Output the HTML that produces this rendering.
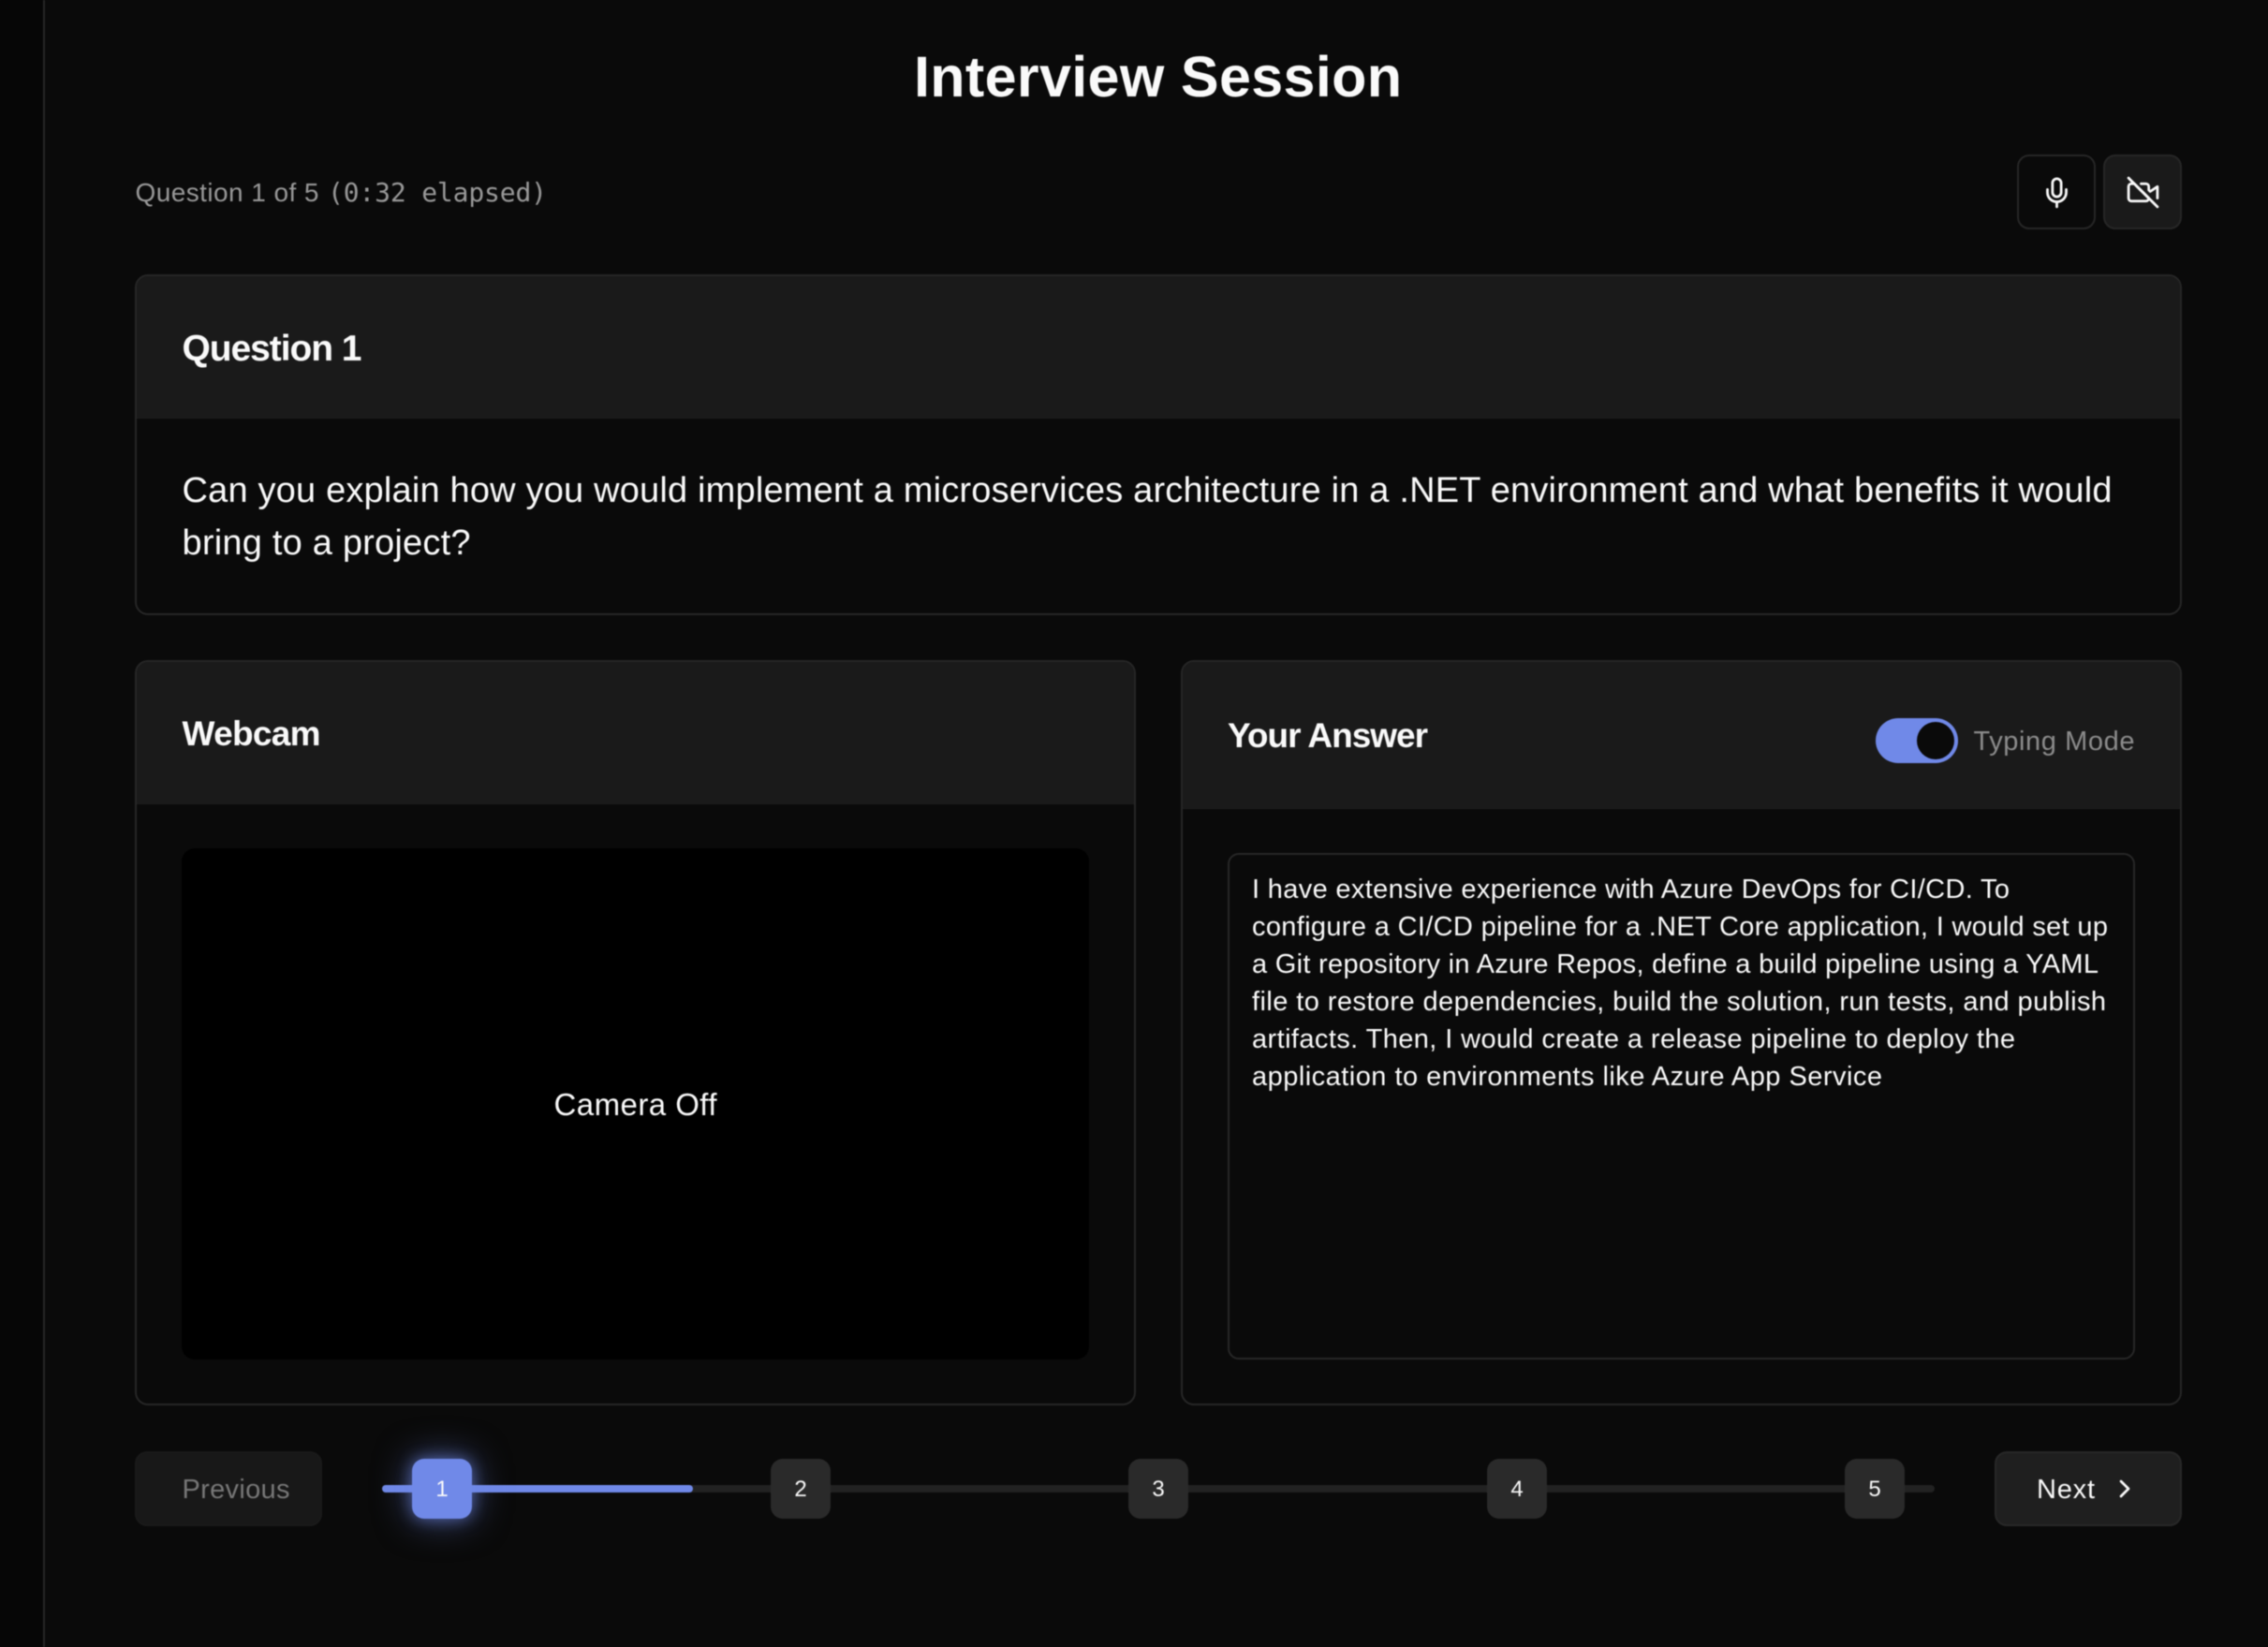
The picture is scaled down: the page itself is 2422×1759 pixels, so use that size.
<!DOCTYPE html>
<html lang="en"><head><meta charset="utf-8"><title>Interview Session</title>
<style>
html,body{margin:0;padding:0;width:2422px;height:1759px;overflow:hidden;background:#0a0a0a}
#w{position:absolute;left:0;top:0;width:2422px;height:1759px;filter:blur(.45px)}
.a{position:absolute;box-sizing:border-box}
.card{border:2px solid #272727;border-radius:14px;background:#0a0a0a;overflow:hidden}
.head{position:absolute;left:0;top:0;right:0;background:#1a1a1a;border-bottom:1px solid #1e1e1e}
.step{width:64px;height:64px;top:1558px;border-radius:13px;background:#2a2a2a}
svg.t{position:absolute;left:0;top:0}
svg.t text{font-family:"Liberation Sans",sans-serif;fill:#fafafa}
</style></head>
<body>
<div id="w">
<div class="a" style="left:0;top:0;width:48px;height:1759px;background:#060606;border-right:2px solid #272727"></div>

<div class="a" style="left:2154px;top:165px;width:84px;height:80px;border:2px solid #272727;border-radius:13px;background:#0a0a0a"></div>
<div class="a" style="left:2246px;top:165px;width:84px;height:80px;border:2px solid #272727;border-radius:13px;background:#1a1a1a"></div>
<svg class="a" style="left:2177.5px;top:186.5px" width="37" height="37" viewBox="0 0 24 24" fill="none" stroke="#fafafa" stroke-width="1.8" stroke-linecap="round" stroke-linejoin="round"><path d="M12 2.5a3 3 0 0 0-3 3v6.5a3 3 0 0 0 6 0V5.5a3 3 0 0 0-3-3Z"/><path d="M18.5 10v2a6.500 6.500 0 0 1-13 0v-2"/><line x1="12" x2="12" y1="19" y2="22"/></svg>
<svg class="a" style="left:2269.5px;top:186.5px" width="37" height="37" viewBox="0 0 24 24" fill="none" stroke="#fafafa" stroke-width="1.8" stroke-linecap="round" stroke-linejoin="round"><path d="M10.660 6H14a2 2 0 0 1 2 2v2.340l1 1L22 8v8"/><path d="M16 16a2 2 0 0 1-2 2H4a2 2 0 0 1-2-2V8a2 2 0 0 1 2-2h2l10 10Z"/><line x1="2" x2="22" y1="2" y2="22"/></svg>

<div class="a card" style="left:144px;top:293px;width:2186px;height:364px"><div class="head" style="height:151px"></div></div>

<div class="a card" style="left:144px;top:705px;width:1069px;height:796px"><div class="head" style="height:151px"></div></div>
<div class="a" style="left:194px;top:906px;width:969px;height:546px;background:#000;border-radius:14px"></div>

<div class="a card" style="left:1261px;top:705px;width:1069px;height:796px"><div class="head" style="height:156px"></div></div>
<div class="a" style="left:2003px;top:767px;width:88px;height:48px;border-radius:24px;background:#7089e8"></div>
<div class="a" style="left:2047px;top:771px;width:40px;height:40px;border-radius:50%;background:#0a0a0a"></div>
<div class="a" style="left:1311px;top:911px;width:969px;height:541px;border:2px solid #272727;border-radius:12px;background:#0a0a0a"></div>

<div class="a" style="left:144px;top:1550px;width:200px;height:80px;border-radius:13px;background:#181818;border:2px solid #1a1a1a"></div>
<div class="a" style="left:408px;top:1586px;width:1658px;height:8px;border-radius:4px;background:#222"></div>
<div class="a" style="left:408px;top:1586px;width:332px;height:8px;border-radius:4px;background:#7089e8"></div>
<div class="a step" style="left:440px;background:#7089e8;box-shadow:0 0 16px rgba(112,137,232,.6),0 0 40px rgba(112,137,232,.55)"></div>
<div class="a step" style="left:823px"></div>
<div class="a step" style="left:1205px"></div>
<div class="a step" style="left:1588px"></div>
<div class="a step" style="left:1970px"></div>
<div class="a" style="left:2130px;top:1550px;width:200px;height:80px;border-radius:13px;background:#1f1f1f;border:2px solid #282828"></div>
<svg class="a" style="left:2253px;top:1574px" width="32" height="32" viewBox="0 0 24 24" fill="none" stroke="#fafafa" stroke-width="2" stroke-linecap="round" stroke-linejoin="round"><path d="m9 18 6-6-6-6"/></svg>

<svg class="t" width="2422" height="1759" viewBox="0 0 2422 1759">
<text x="976" y="103" font-size="61" font-weight="700" textLength="521" lengthAdjust="spacing">Interview Session</text>
<text x="144.500" y="215" font-size="28" style="fill:#999" textLength="196" lengthAdjust="spacing">Question 1 of 5</text>
<text x="350" y="215" font-size="28" style="fill:#999;font-family:'DejaVu Sans Mono',monospace" textLength="234" lengthAdjust="spacing">(0:32 elapsed)</text>
<text x="194.500" y="385" font-size="39" font-weight="700" textLength="192" lengthAdjust="spacing">Question 1</text>
<text x="194.500" y="536" font-size="38" textLength="2061" lengthAdjust="spacing">Can you explain how you would implement a microservices architecture in a .NET environment and what benefits it would</text>
<text x="194.500" y="592" font-size="38" textLength="308" lengthAdjust="spacing">bring to a project?</text>
<text x="194.500" y="796" font-size="37" font-weight="700" textLength="148" lengthAdjust="spacing">Webcam</text>
<text x="1311" y="798" font-size="37" font-weight="700" textLength="214" lengthAdjust="spacing">Your Answer</text>
<text x="2107.500" y="801" font-size="29" style="fill:#8c8c8c" textLength="172" lengthAdjust="spacing">Typing Mode</text>
<text x="591.500" y="1191" font-size="33" textLength="174" lengthAdjust="spacing">Camera Off</text>
<text x="1337" y="959" font-size="29" textLength="809" lengthAdjust="spacing">I have extensive experience with Azure DevOps for CI/CD. To</text>
<text x="1337" y="999" font-size="29" textLength="914" lengthAdjust="spacing">configure a CI/CD pipeline for a .NET Core application, I would set up</text>
<text x="1337" y="1039" font-size="29" textLength="904" lengthAdjust="spacing">a Git repository in Azure Repos, define a build pipeline using a YAML</text>
<text x="1337" y="1079" font-size="29" textLength="912" lengthAdjust="spacing">file to restore dependencies, build the solution, run tests, and publish</text>
<text x="1337" y="1119" font-size="29" textLength="815" lengthAdjust="spacing">artifacts. Then, I would create a release pipeline to deploy the</text>
<text x="1337" y="1159" font-size="29" textLength="673" lengthAdjust="spacing">application to environments like Azure App Service</text>
<text x="194.500" y="1600" font-size="29" style="fill:#777" textLength="115" lengthAdjust="spacing">Previous</text>
<text x="472" y="1598" font-size="24" text-anchor="middle">1</text>
<text x="855" y="1598" font-size="24" text-anchor="middle">2</text>
<text x="1237" y="1598" font-size="24" text-anchor="middle">3</text>
<text x="1620" y="1598" font-size="24" text-anchor="middle">4</text>
<text x="2002" y="1598" font-size="24" text-anchor="middle">5</text>
<text x="2175" y="1600" font-size="29" textLength="62" lengthAdjust="spacing">Next</text>
</svg>
</div>
</body></html>
